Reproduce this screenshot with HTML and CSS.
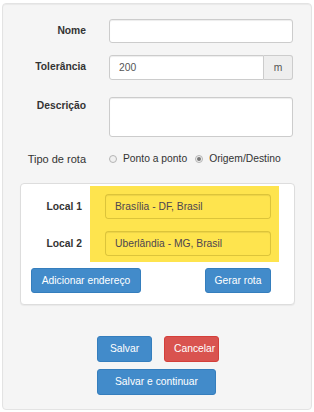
FILE: index.html
```html
<!DOCTYPE html>
<html lang="pt">
<head>
<meta charset="utf-8">
<link rel="stylesheet" href="styles.css">
</head>
<body>
<form class="well">
  <div class="row">
    <label class="lbl">Nome</label>
    <div class="control"><input class="input" type="text"></div>
  </div>
  <div class="row row-tol">
    <label class="lbl">Tolerância</label>
    <div class="control group">
      <input class="input input-group" type="text" value="200">
      <span class="addon">m</span>
    </div>
  </div>
  <div class="row row-desc">
    <label class="lbl lbl-desc">Descrição</label>
    <div class="control"><textarea class="input textarea"></textarea></div>
  </div>
  <div class="row row-tipo">
    <span class="lbl-plain">Tipo de rota</span>
    <div class="radios">
      <span class="radio"><span class="dot"></span>Ponto a ponto</span>
      <span class="radio"><span class="dot checked"></span>Origem/Destino</span>
    </div>
  </div>

  <div class="panel">
    <div class="locals">
      <div class="local-labels">
        <span class="local-lbl">Local 1</span>
        <span class="local-lbl">Local 2</span>
      </div>
      <div class="highlight">
        <input class="input yellow" type="text" value="Brasília - DF, Brasil">
        <input class="input yellow" type="text" value="Uberlândia - MG, Brasil">
      </div>
    </div>
    <div class="panel-actions">
      <button type="button" class="btn btn-primary btn-add">Adicionar endereço</button>
      <button type="button" class="btn btn-primary btn-route">Gerar rota</button>
    </div>
  </div>

  <div class="actions">
    <button type="button" class="btn btn-primary btn-save">Salvar</button>
    <button type="button" class="btn btn-danger btn-cancel">Cancelar</button>
    <button type="button" class="btn btn-primary btn-cont">Salvar e continuar</button>
  </div>
</form>
</body>
</html>
```
FILE: styles.css
```css
* { box-sizing: border-box; }
html, body { background: #fff; }
body {
  margin: 3px 2px 1px 2px;
  font-family: "Liberation Sans", Arial, sans-serif;
  font-size: 10.3px;
  color: #333;
}
.well {
  background: #f5f5f5;
  border: 1px solid #e3e3e3;
  border-radius: 4px;
  box-shadow: inset 0 1px 1px rgba(0,0,0,0.05);
  padding: 15px 18px 15px 0;
  height: 407px;
}
.row {
  display: flex;
  align-items: flex-start;
  gap: 23px;
  margin-bottom: 12px;
}
.row-tol { margin-bottom: 17px; }
.row-desc { margin-bottom: 15px; }
.lbl {
  width: 83px;
  flex: none;
  text-align: right;
  font-weight: bold;
  line-height: 12px;
  padding-top: 6px;
}
.lbl-desc { padding-top: 3px; }
.control { flex: 1; display: flex; }
.input {
  display: block;
  width: 100%;
  height: 24px;
  padding: 3px 9px;
  font: inherit;
  color: #555;
  background: #fff;
  border: 1px solid #ccc;
  border-radius: 3px;
  box-shadow: inset 0 1px 1px rgba(0,0,0,0.075);
  outline: none;
}
.group .input-group {
  height: 25px;
  border-radius: 3px 0 0 3px;
  flex: 1;
  min-width: 0;
}
.addon {
  width: 29px;
  flex: none;
  height: 25px;
  line-height: 23px;
  text-align: center;
  color: #555;
  background: #eee;
  border: 1px solid #ccc;
  border-left: 0;
  border-radius: 0 3px 3px 0;
}
.textarea {
  height: 40px;
  resize: none;
}
.row-tipo {
  align-items: center;
  gap: 23px;
  margin-bottom: 18px;
  height: 13px;
}
.lbl-plain {
  width: 83px;
  flex: none;
  text-align: right;
  font-size: 11px;
}
.radios {
  display: flex;
  align-items: center;
  gap: 8px;
}
.radio {
  display: flex;
  align-items: center;
  gap: 6px;
}
.dot {
  width: 8px;
  height: 8px;
  border-radius: 50%;
  border: 1px solid #b4b4b4;
  background: #f0f0f0;
  display: flex;
  align-items: center;
  justify-content: center;
}
.dot.checked::after {
  content: "";
  width: 4px;
  height: 4px;
  border-radius: 50%;
  background: #777;
}
.panel {
  margin: 0 -2px 0 17px;
  background: #fff;
  border: 1px solid #ddd;
  border-radius: 4px;
  box-shadow: 0 1px 1px rgba(0,0,0,0.05);
  padding: 2px 23px 10px 10px;
  height: 122px;
}
.locals {
  display: flex;
  margin-right: -8px;
}
.local-labels {
  width: 51px;
  flex: none;
  display: flex;
  flex-direction: column;
  gap: 12px;
  padding-top: 8px;
  margin-right: 8px;
}
.local-lbl {
  height: 25px;
  line-height: 25px;
  text-align: right;
  font-weight: bold;
}
.highlight {
  flex: 1;
  background: #fee44e;
  padding: 8px 8px 6px 15px;
  display: flex;
  flex-direction: column;
  gap: 12px;
}
.input.yellow {
  height: 25px;
  background: transparent;
  border-color: rgba(120,100,0,0.25);
  color: #4d4550;
}
.panel-actions {
  display: flex;
  justify-content: space-between;
  margin-top: 6px;
}
.btn {
  display: inline-block;
  height: 26px;
  font: inherit;
  color: #fff;
  border: 1px solid transparent;
  border-radius: 3px;
  padding: 0 10px;
  line-height: 24px;
  cursor: pointer;
  white-space: nowrap;
}
.btn-primary { background: #428bca; border-color: #357ebd; }
.btn-danger { background: #d9534f; border-color: #d43f3a; }
.btn-add { height: 25px; width: 110px; padding: 0; }
.btn-route { height: 25px; width: 66px; padding: 0; }
.actions {
  width: 122px;
  margin: 31px 0 0 94px;
  display: flex;
  flex-wrap: wrap;
  gap: 7px 12px;
}
.btn-save { width: 55px; padding: 0; }
.btn-cancel { width: 55px; padding: 0 0 0 9px; text-align: left; overflow: hidden; }
.btn-cont { width: 119px; padding: 0; }
```
